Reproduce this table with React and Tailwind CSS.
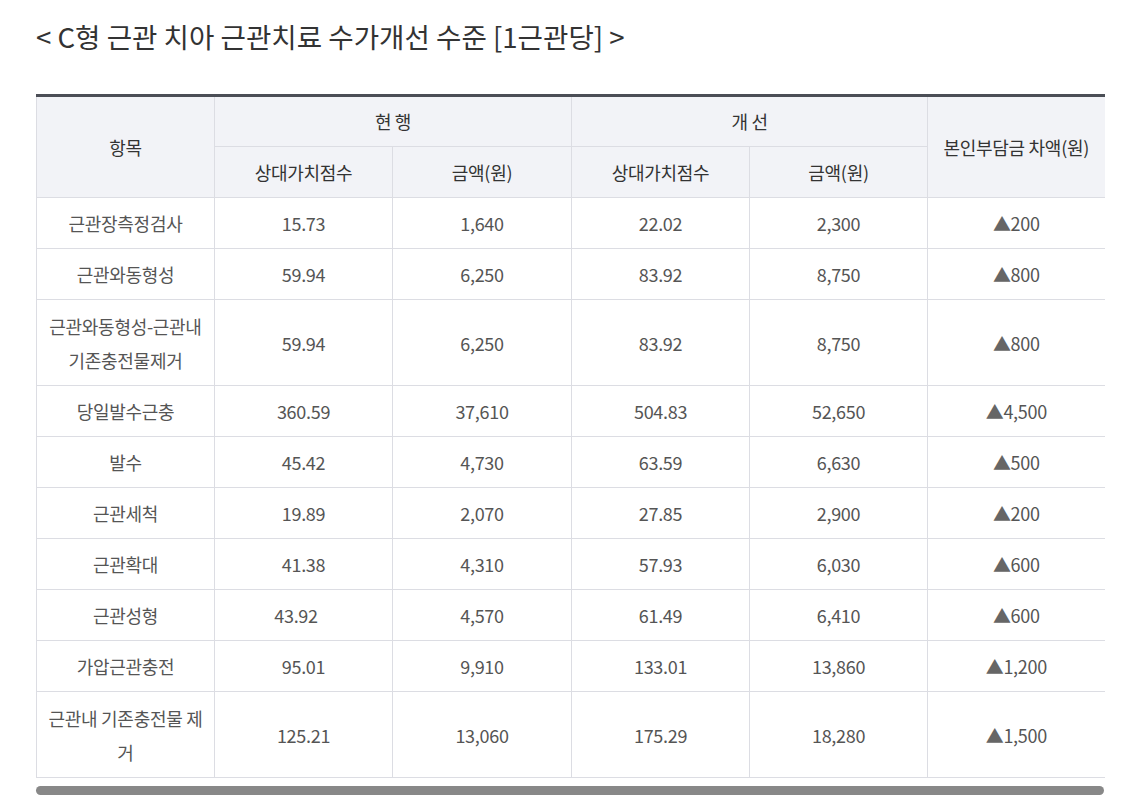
import React from 'react';

const rows = [
  { name: '근관장측정검사', a: '15.73', b: '1,640', c: '22.02', d: '2,300', diff: '200' },
  { name: '근관와동형성', a: '59.94', b: '6,250', c: '83.92', d: '8,750', diff: '800' },
  { name: ['근관와동형성-근관내', '기존충전물제거'], a: '59.94', b: '6,250', c: '83.92', d: '8,750', diff: '800' },
  { name: '당일발수근충', a: '360.59', b: '37,610', c: '504.83', d: '52,650', diff: '4,500' },
  { name: '발수', a: '45.42', b: '4,730', c: '63.59', d: '6,630', diff: '500' },
  { name: '근관세척', a: '19.89', b: '2,070', c: '27.85', d: '2,900', diff: '200' },
  { name: '근관확대', a: '41.38', b: '4,310', c: '57.93', d: '6,030', diff: '600' },
  { name: '근관성형', a: '43.92', b: '4,570', c: '61.49', d: '6,410', diff: '600', shift: true },
  { name: '가압근관충전', a: '95.01', b: '9,910', c: '133.01', d: '13,860', diff: '1,200' },
  { name: ['근관내 기존충전물 제', '거'], a: '125.21', b: '13,060', c: '175.29', d: '18,280', diff: '1,500' },
];

const th = 'border border-[#dcdde3] font-normal text-[#333] h-[51px] p-0';
const td = 'border border-[#dcdde3] px-2 leading-[34px] text-[#555]';

export default function App() {
  return (
    <div
      className="min-h-screen bg-white px-[36px] pt-[18px]"
      style={{ fontFamily: '"Noto Sans CJK KR", "Noto Sans", sans-serif' }}
    >
      {/* Title */}
      <h2 className="text-[27.6px] leading-[36px] text-[#333]">
        &lt; C형 근관 치아 근관치료 수가개선 수준 [1근관당] &gt;
      </h2>

      {/* Table */}
      <div className="mt-[40px] w-[1068px]">
        <table className="w-full border-collapse table-fixed text-[18px] tracking-[-0.3px] text-center border-t-[3px] border-t-[#4b4e56]">
          <colgroup>
            <col className="w-[178px]" />
            <col className="w-[178px]" />
            <col className="w-[179px]" />
            <col className="w-[178px]" />
            <col className="w-[178px]" />
            <col className="w-[177px]" />
          </colgroup>
          <thead className="bg-[#f2f3f7]">
            <tr>
              <th rowSpan={2} className={`${th} border-t-0`}>항목</th>
              <th colSpan={2} className={`${th} border-t-0`}>현 행</th>
              <th colSpan={2} className={`${th} border-t-0`}>개 선</th>
              <th rowSpan={2} className={`${th} border-t-0 border-r-0`}>본인부담금 차액(원)</th>
            </tr>
            <tr>
              <th className={th}>상대가치점수</th>
              <th className={th}>금액(원)</th>
              <th className={th}>상대가치점수</th>
              <th className={th}>금액(원)</th>
            </tr>
          </thead>
          <tbody>
            {rows.map((r, i) => {
              const multi = Array.isArray(r.name);
              const cell = `${td} ${multi ? 'pt-[9px] pb-2' : 'py-2'}`;
              return (
                <tr key={i}>
                  <td className={cell}>
                    {multi ? (
                      <>
                        {r.name[0]}
                        <br />
                        {r.name[1]}
                      </>
                    ) : (
                      r.name
                    )}
                  </td>
                  <td className={cell}>
                    {r.shift ? <span className="inline-block pr-[15px]">{r.a}</span> : r.a}
                  </td>
                  <td className={cell}>{r.b}</td>
                  <td className={cell}>{r.c}</td>
                  <td className={cell}>{r.d}</td>
                  <td className={`${cell} border-r-0`}>
                    <span className="text-[#666]">▲</span>
                    {r.diff}
                  </td>
                </tr>
              );
            })}
          </tbody>
        </table>

        {/* Scrollbar */}
        <div className="mt-[8px] h-[9px] w-full rounded-full bg-[#888]" />
      </div>
    </div>
  );
}
